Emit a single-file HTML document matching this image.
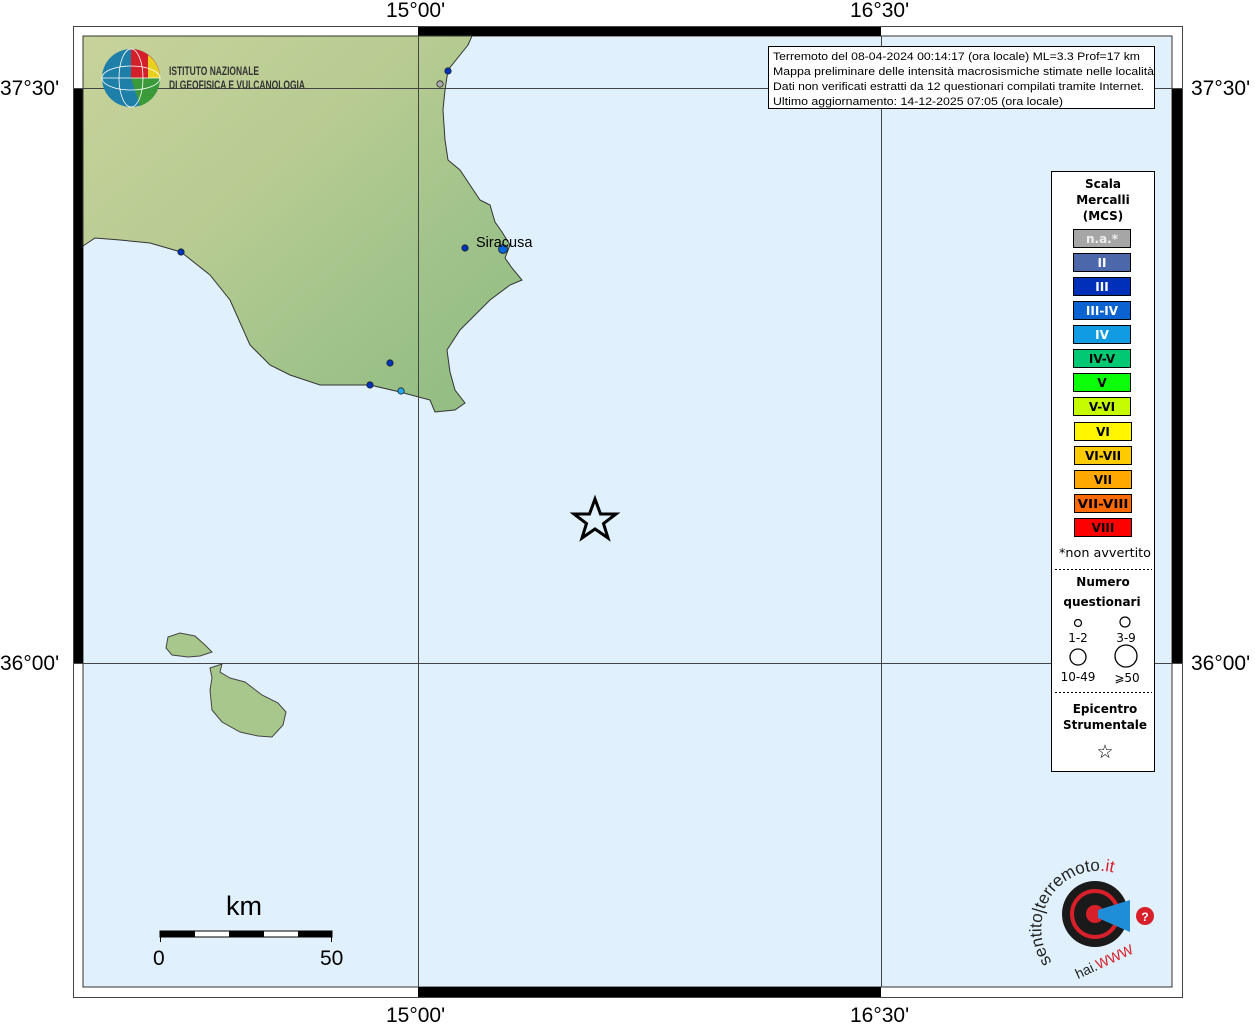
<!DOCTYPE html>
<html><head><meta charset="utf-8"><style>
body{margin:0;width:1255px;height:1024px;background:#fff;overflow:hidden;font-family:"Liberation Sans",sans-serif}
svg{position:absolute;left:0;top:0}
</style></head><body>
<svg width="1255" height="1024" viewBox="0 0 1255 1024">
<defs>
<linearGradient id="land" x1="0" y1="0" x2="1" y2="1">
<stop offset="0" stop-color="#c7d39b"/><stop offset="0.4" stop-color="#b7cb92"/><stop offset="0.7" stop-color="#9fc38a"/><stop offset="1" stop-color="#8fbb80"/>
</linearGradient>
</defs>
<rect x="73.5" y="26.5" width="1109" height="971" fill="#fff" stroke="#444"/>
<rect x="83" y="36" width="1089" height="951" fill="#e0f1fd" stroke="#333"/>
<rect x="418" y="27" width="463" height="9" fill="#000"/>
<rect x="418" y="987" width="463" height="10" fill="#000"/>
<rect x="74" y="88" width="9" height="575" fill="#000"/>
<rect x="1172" y="88" width="10" height="575" fill="#000"/>
<path d="M83,36 L472,36 468,45 460,55 448,70 445,90 443,110 445,140 448,160 460,170 470,185 480,200 490,205 495,222 502,232 510,245 505,258 512,268 522,280 510,285 490,300 475,315 460,330 447,350 450,372 455,390 465,403 455,410 435,412 430,400 400,392 370,385 320,385 290,375 270,365 250,345 230,300 210,275 181,252 150,243 120,240 95,238 83,246 Z" fill="url(#land)" stroke="#333" stroke-width="1"/>
<path d="M168,637 L180,633 195,636 205,645 212,652 200,656 188,657 172,655 166,648 Z" fill="#a8c78c" stroke="#444"/>
<path d="M210,668 L222,664 220,672 230,678 245,682 262,695 278,703 286,712 283,725 272,737 258,736 240,732 222,722 212,710 210,690 212,678 Z" fill="#a8c78c" stroke="#444"/>
<line x1="418.5" y1="36" x2="418.5" y2="987" stroke="#444"/>
<line x1="881.5" y1="36" x2="881.5" y2="987" stroke="#444"/>
<line x1="74" y1="88.5" x2="1182" y2="88.5" stroke="#444"/>
<line x1="74" y1="663.5" x2="1182" y2="663.5" stroke="#444"/>
<circle cx="131" cy="78" r="29" fill="#1e7fa8"/>
<path d="M131,49 A29,29 0 0 1 160,78 L131,78 Z" fill="#d4202a"/>
<path d="M148,55 A29,29 0 0 1 160,78 L148,78 Z" fill="#e8d020"/>
<path d="M131,78 L160,78 A29,29 0 0 1 140,106 Z" fill="#3a9a3a"/>
<g stroke="#fff" stroke-width="0.8" fill="none"><ellipse cx="131" cy="78" rx="12" ry="29"/><line x1="102" y1="78" x2="160" y2="78"/><ellipse cx="131" cy="78" rx="29" ry="12"/></g>
<text x="169" y="75" font-size="12" font-weight="bold" fill="#333" textLength="90" lengthAdjust="spacingAndGlyphs">ISTITUTO NAZIONALE</text>
<text x="169" y="89" font-size="12" font-weight="bold" fill="#333" textLength="136" lengthAdjust="spacingAndGlyphs">DI GEOFISICA E VULCANOLOGIA</text>
<g stroke="#222" stroke-width="0.8">
<circle cx="448" cy="71" r="3.2" fill="#0033bb"/>
<circle cx="440" cy="84" r="3.2" fill="#aaa"/>
<circle cx="181" cy="252" r="3.2" fill="#0033bb"/>
<circle cx="465" cy="248" r="3.2" fill="#0033bb"/>
<circle cx="503" cy="249" r="4.5" fill="#0066dd"/>
<circle cx="390" cy="363" r="3.2" fill="#0033bb"/>
<circle cx="370" cy="385" r="3.2" fill="#0033bb"/>
<circle cx="401" cy="391" r="3.2" fill="#22aaee"/>
</g>
<text x="476" y="247" font-size="14.5" fill="#000">Siracusa</text>
<polygon points="595,499 600.5,514 616,514 603.5,523.5 608,538 595,529 582,538 586.5,523.5 574,514 589.5,514" fill="none" stroke="#000" stroke-width="3"/>
<text x="226" y="915" font-size="27" fill="#000">km</text>
<rect x="160" y="931" width="172" height="6" fill="#fff" stroke="#000"/>
<rect x="160" y="931" width="35" height="6" fill="#000"/><rect x="229" y="931" width="35" height="6" fill="#000"/><rect x="298" y="931" width="34" height="6" fill="#000"/>
<line x1="160.5" y1="931" x2="160.5" y2="942" stroke="#000"/><line x1="331.5" y1="931" x2="331.5" y2="942" stroke="#000"/>
<text x="153" y="965" font-size="21">0</text><text x="320" y="965" font-size="21">50</text>
<g font-size="21" fill="#000">
<text x="386" y="17">15°00'</text><text x="850" y="17">16°30'</text>
<text x="386" y="1022">15°00'</text><text x="850" y="1022">16°30'</text>
<text x="0" y="95">37°30'</text><text x="0" y="670">36°00'</text>
<text x="1191" y="95">37°30'</text><text x="1191" y="670">36°00'</text>
</g>
<rect x="768.5" y="46.5" width="386" height="62" fill="#fff" stroke="#000"/>
<g font-size="11.2" fill="#000">
<text x="773" y="60" textLength="367" lengthAdjust="spacingAndGlyphs">Terremoto del 08-04-2024 00:14:17 (ora locale) ML=3.3 Prof=17 km</text>
<text x="773" y="75" textLength="381" lengthAdjust="spacingAndGlyphs">Mappa preliminare delle intensità macrosismiche stimate nelle località</text>
<text x="773" y="90" textLength="371" lengthAdjust="spacingAndGlyphs">Dati non verificati estratti da 12 questionari compilati tramite Internet.</text>
<text x="773" y="105" textLength="290" lengthAdjust="spacingAndGlyphs">Ultimo aggiornamento: 14-12-2025 07:05 (ora locale)</text>
</g>
<rect x="1051.5" y="171.5" width="103" height="600" fill="#fff" stroke="#000"/>
<g font-family="DejaVu Sans,sans-serif" font-weight="bold" font-size="12" text-anchor="middle" fill="#000">
<text x="1103" y="188">Scala</text><text x="1103" y="204">Mercalli</text><text x="1103" y="220">(MCS)</text>
</g>
<g stroke="#000" stroke-width="1">
<rect x="1073.5" y="229.5" width="57" height="18" fill="#a6a6a6"/>
<rect x="1073.5" y="253.5" width="57" height="18" fill="#4c68aa"/>
<rect x="1073.5" y="277.5" width="57" height="18" fill="#0030b8"/>
<rect x="1073.5" y="301.5" width="57" height="18" fill="#0a63d0"/>
<rect x="1073.5" y="325.5" width="57" height="18" fill="#119be3"/>
<rect x="1073.5" y="349.5" width="57" height="18" fill="#01c873"/>
<rect x="1073.5" y="373.5" width="57" height="18" fill="#0aff08"/>
<rect x="1073.5" y="397.5" width="57" height="18" fill="#c5fd00"/>
<rect x="1074.5" y="422.5" width="57" height="18" fill="#fff600"/>
<rect x="1074.5" y="446.5" width="57" height="18" fill="#fecb00"/>
<rect x="1074.5" y="470.5" width="57" height="18" fill="#fea800"/>
<rect x="1074.5" y="494.5" width="57" height="18" fill="#fe6a00"/>
<rect x="1074.5" y="518.5" width="57" height="18" fill="#fe0000"/>
</g>
<g font-family="DejaVu Sans,sans-serif" font-weight="bold" font-size="12" text-anchor="middle">
<text x="1102" y="243" fill="#eee">n.a.*</text>
<text x="1102" y="267" fill="#fff">II</text>
<text x="1102" y="291" fill="#fff">III</text>
<text x="1102" y="315" fill="#fff">III-IV</text>
<text x="1102" y="339" fill="#fff">IV</text>
<text x="1102" y="363">IV-V</text>
<text x="1102" y="387">V</text>
<text x="1102" y="411">V-VI</text>
<text x="1103" y="436">VI</text>
<text x="1103" y="460">VI-VII</text>
<text x="1103" y="484">VII</text>
<text x="1103" y="508" textLength="51" lengthAdjust="spacingAndGlyphs">VII-VIII</text>
<text x="1103" y="532">VIII</text>
</g>
<g font-family="DejaVu Sans,sans-serif" font-size="12" text-anchor="middle">
<text x="1105" y="557" textLength="92" lengthAdjust="spacingAndGlyphs">*non avvertito</text>
<line x1="1055" y1="569.5" x2="1152" y2="569.5" stroke="#000" stroke-dasharray="2,2"/>
<text x="1103" y="586" font-weight="bold">Numero</text>
<text x="1102" y="606" font-weight="bold">questionari</text>
<circle cx="1078" cy="623" r="3.5" fill="none" stroke="#000" stroke-width="1.2"/>
<circle cx="1125" cy="622" r="5" fill="none" stroke="#000" stroke-width="1.2"/>
<text x="1078" y="642">1-2</text><text x="1126" y="642">3-9</text>
<circle cx="1078" cy="657" r="8" fill="none" stroke="#000" stroke-width="1.3"/>
<circle cx="1126" cy="656" r="11" fill="none" stroke="#000" stroke-width="1.3"/>
<text x="1078" y="681">10-49</text><text x="1127" y="682">⩾50</text>
<line x1="1055" y1="692.5" x2="1152" y2="692.5" stroke="#000" stroke-dasharray="2,2"/>
<text x="1105" y="713" font-weight="bold">Epicentro</text>
<text x="1105" y="729" font-weight="bold">Strumentale</text>
<text x="1105" y="758" font-size="19">☆</text>
</g>
<circle cx="1095" cy="914" r="33" fill="#1a1a1a"/>
<circle cx="1095" cy="914" r="23" fill="none" stroke="#d8202a" stroke-width="4"/>
<circle cx="1095" cy="914" r="9" fill="#d8202a"/>
<path d="M1098,910 L1130,900 L1130,932 L1098,918 Z" fill="#1f8ed8"/>
<circle cx="1145" cy="916" r="9" fill="#d8202a"/>
<text x="1145" y="921" font-size="12" fill="#fff" text-anchor="middle" font-weight="bold">?</text>
<path id="arc" d="M1052,962 A49,49 0 1 1 1146,895" fill="none"/>
<text font-size="17" fill="#222"><textPath href="#arc">sentito|terremoto<tspan fill="#d8202a">.it</tspan></textPath></text>
<text x="1072" y="968" font-size="14" fill="#222" transform="rotate(-25 1100 960)">hai.<tspan fill="#d8202a">WWW</tspan></text>
</svg>
</body></html>
